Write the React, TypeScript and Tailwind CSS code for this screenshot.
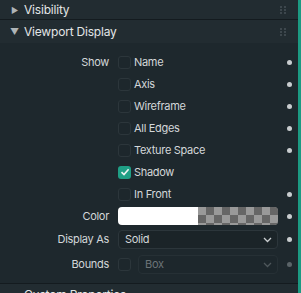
import React from "react";

const rows = [
  { label: "Name", checked: false, dot: true },
  { label: "Axis", checked: false, dot: true },
  { label: "Wireframe", checked: false, dot: true },
  { label: "All Edges", checked: false, dot: true },
  { label: "Texture Space", checked: false, dot: true },
  { label: "Shadow", checked: true, dot: false },
  { label: "In Front", checked: false, dot: true },
];

function Grip() {
  return (
    <svg width="6" height="8" viewBox="0 0 6 8" className="mr-[12px]">
      {[0, 3, 6].map((y) =>
        [0, 4].map((x) => (
          <rect key={x + "-" + y} x={x} y={y} width="2" height="2" fill="#3d474d" />
        ))
      )}
    </svg>
  );
}

function Dot({ dim }: { dim?: boolean }) {
  return (
    <div className="w-[20px] flex justify-center pl-[2px]">
      <div className={dim ? "w-[5px] h-[5px] rounded-full bg-[#5b6468]" : "w-[5px] h-[5px] rounded-full bg-[#c9cdcf]"} />
    </div>
  );
}

function Check({ checked }: { checked: boolean }) {
  return checked ? (
    <div className="w-[13px] h-[13px] rounded-[3px] bg-[#1f9f85] flex items-center justify-center shrink-0">
      <svg width="10" height="10" viewBox="0 0 10 10">
        <path d="M1.5 5.2 L4 7.6 L8.6 2.2" stroke="#eef4f2" strokeWidth="1.6" fill="none" />
      </svg>
    </div>
  ) : (
    <div className="w-[13px] h-[13px] rounded-[3px] bg-[#1d272c] border border-[#2c363b] shrink-0" />
  );
}

function Chevron({ color }: { color: string }) {
  return (
    <svg width="9" height="6" viewBox="0 0 9 6">
      <path d="M1 1 L4.5 4.5 L8 1" stroke={color} strokeWidth="1.3" fill="none" />
    </svg>
  );
}

export default function App() {
  return (
    <div
      className="w-[301px] h-[293px] overflow-hidden bg-[#1f292e] text-[#d3d7d9] text-[11px] tracking-[-0.3px] flex"
      style={{ fontFamily: "Inter, 'DejaVu Sans', sans-serif" }}
    >
      <div className="flex-1 flex flex-col">
        {/* Visibility header */}
        <div className="h-[20px] shrink-0 bg-[#222c31] flex items-center border-b border-[#141b1f]">
          <span className="w-[24px] pl-[11px] text-[8px] text-[#aeb4b7]">▶</span>
          <span className="flex-1 text-[12px] tracking-[-0.2px] text-[#e2e5e6]">Visibility</span>
          <Grip />
        </div>
        {/* Viewport Display header */}
        <div className="h-[23px] shrink-0 bg-[#222c31] flex items-center">
          <span className="w-[24px] pl-[10px] text-[9px] text-[#aeb4b7]">▼</span>
          <span className="flex-1 text-[12px] tracking-[-0.2px] text-[#e2e5e6]">Viewport Display</span>
          <Grip />
        </div>
        {/* body */}
        <div className="shrink-0 bg-[#1e282d] pt-[8px] flex flex-col">
          {rows.map((r, i) => (
            <div key={r.label} className="h-[22px] shrink-0 flex items-center">
              <div className="w-[118px] text-right pr-[9px]">{i === 0 ? "Show" : ""}</div>
              <Check checked={r.checked} />
              <span className="ml-[3px] flex-1">{r.label}</span>
              {r.dot ? <Dot /> : <div className="w-[20px]" />}
            </div>
          ))}
          <div className="h-[22px] shrink-0 flex items-center">
            <div className="w-[118px] text-right pr-[9px]">Color</div>
            <div className="w-[160px] h-[18px] rounded-[4px] overflow-hidden flex">
              <div className="w-1/2 bg-white" />
              <div
                className="w-1/2 bg-[#999999]"
                style={{
                  backgroundImage:
                    "linear-gradient(45deg,#666 25%,transparent 25%,transparent 75%,#666 75%),linear-gradient(45deg,#666 25%,transparent 25%,transparent 75%,#666 75%)",
                  backgroundSize: "16px 16px",
                  backgroundPosition: "0 0, 8px 8px",
                }}
              />
            </div>
            <Dot />
          </div>
          <div className="h-[25px] shrink-0 flex items-center">
            <div className="w-[118px] text-right pr-[9px]">Display As</div>
            <div className="w-[160px] h-[19px] rounded-[4px] bg-[#1b2428] border border-[#2c363b] flex items-center justify-between pl-[6px] pr-[5px]">
              <span>Solid</span>
              <Chevron color="#c9cdcf" />
            </div>
            <Dot />
          </div>
          <div className="h-[25px] shrink-0 flex items-center">
            <div className="w-[118px] text-right pr-[9px]">Bounds</div>
            <Check checked={false} />
            <div className="ml-[7px] w-[140px] h-[19px] rounded-[4px] bg-[#1d272c] border border-[#263035] flex items-center justify-between pl-[6px] pr-[5px] text-[#6c7478]">
              <span>Box</span>
              <Chevron color="#4e575b" />
            </div>
            <Dot dim />
          </div>
          <div className="mt-[6px] h-[1px] bg-[#141b1f]" />
        </div>
        <div className="flex-1 bg-[#222c31] pl-[24px] pt-[3px] text-[12px] tracking-[-0.2px] leading-[16px] text-[#e2e5e6]">
          Custom Properties
        </div>
      </div>
      <div className="w-[3px] shrink-0 bg-[#1c9a82]" />
    </div>
  );
}
